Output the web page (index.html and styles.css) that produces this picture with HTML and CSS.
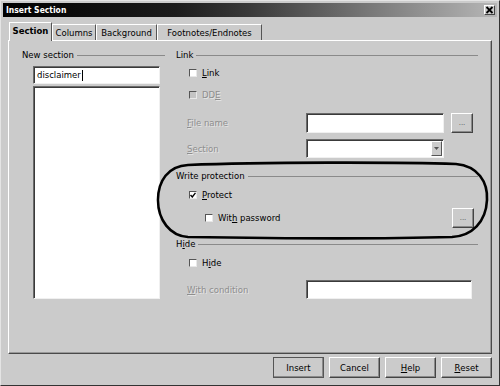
FILE: index.html
```html
<!DOCTYPE html>
<html lang="en">
<head>
  <meta charset="UTF-8" />
  <title>Insert Section</title>
  <link rel="stylesheet" href="styles.css">
</head>
<body>
  <div class="window">
    <div class="titlebar">
      <span class="title">Insert Section</span>
      <span class="close">
        <svg width="9" height="8" viewBox="0 0 9 8"><path d="M1.5 1 L7.5 7 M7.5 1 L1.5 7" stroke="#000" stroke-width="1.8"/></svg>
      </span>
    </div>

    <div class="tabs">
      <div class="tab active" style="width:43px">Section</div>
      <div class="tab" style="width:44px">Columns</div>
      <div class="tab" style="width:61px">Background</div>
      <div class="tab" style="width:105px">Footnotes/Endnotes</div>
    </div>

    <div class="panel">
      <div class="col-left">
        <div class="legend"><span>New section</span></div>
        <div class="field name">disclaimer<span class="caret"></span></div>
        <div class="field list"></div>
      </div>

      <div class="col-right">
        <div class="legend"><span>Link</span></div>
        <div class="check-row link-row"><span class="box"></span><span><u>L</u>ink</span></div>
        <div class="check-row dde-row disabled"><span class="box off"></span><span>DD<u>E</u></span></div>
        <div class="field-row file-row">
          <span class="lbl disabled"><u>F</u>ile name</span>
          <span class="field w138"></span>
          <span class="btn small">...</span>
        </div>
        <div class="field-row section-row">
          <span class="lbl disabled"><u>S</u>ection</span>
          <span class="field w138 combo"><span class="drop"><svg width="5" height="3" viewBox="0 0 5 3"><path d="M0 0 H5 L2.5 3 Z" fill="#555"/></svg></span></span>
        </div>

        <div class="legend wp"><span>Write protection</span></div>
        <div class="check-row protect-row">
          <span class="box"><svg width="6" height="6" viewBox="0 0 6 6"><path d="M0.5 3 L2.3 5 L5.5 0.8" stroke="#000" stroke-width="1.4" fill="none"/></svg></span>
          <span><u>P</u>rotect</span>
        </div>
        <div class="check-row pass-row">
          <span class="box"></span><span class="grow">Wit<u>h</u> password</span>
          <span class="btn small">...</span>
        </div>

        <div class="legend hide"><span>H<u>i</u>de</span></div>
        <div class="check-row hide-row"><span class="box"></span><span>H<u>i</u>de</span></div>
        <div class="field-row cond-row">
          <span class="lbl disabled"><u>W</u>ith condition</span>
          <span class="field w166"></span>
        </div>
      </div>
    </div>

    <div class="buttons">
      <span class="btn default">Insert</span>
      <span class="btn">Cancel</span>
      <span class="btn"><u>H</u>elp</span>
      <span class="btn"><u>R</u>eset</span>
    </div>

    <!-- hand drawn mark around the write protection group -->
    <svg class="mark" width="500" height="386" viewBox="0 0 500 386">
      <path d="M188 165 C260 162 400 162 456 164 C478 166 488 182 487 200 C486 222 472 236 452 237 C380 239 250 238 188 237 C170 236 158 220 158 200 C158 181 168 166 188 165 Z"
            fill="none" stroke="#000" stroke-width="2.6"/>
    </svg>
  </div>
</body>
</html>
```

FILE: styles.css
```css
body {
  margin: 0;
  font-family: "DejaVu Sans", sans-serif;
  font-size: 8.5px;
  color: #000;
}
.window {
  position: relative;
  width: 500px;
  height: 386px;
  box-sizing: border-box;
  background: #cbcbcb;
  border: 1px solid;
  border-color: #e4e4e4 #333 #333 #e4e4e4;
  padding: 2px 2px 1px 2px;
  display: flex;
  flex-direction: column;
}
.titlebar {
  height: 14px;
  display: flex;
  align-items: center;
  justify-content: space-between;
  padding: 0 2px 0 3px;
  background: linear-gradient(to right, #000 0%, #1c1c1c 35%, #3a3a3a 50%, #7a7a7a 75%, #b6b6b6 100%);
}
.title {
  color: #fff;
  font-family: "DejaVu Sans Condensed", "DejaVu Sans", sans-serif;
  font-weight: bold;
  font-size: 8.5px;
}
.close {
  width: 11px;
  height: 10px;
  box-sizing: border-box;
  background: #cbcbcb;
  border: 1px solid;
  border-color: #fff #444 #444 #fff;
  display: flex;
  align-items: center;
  justify-content: center;
}
.tabs {
  margin-top: 5px;
  padding-left: 6px;
  height: 18px;
  display: flex;
  align-items: flex-end;
}
.tab {
  height: 16px;
  box-sizing: border-box;
  border-top: 1px solid #fff;
  border-left: 1px solid #fff;
  border-right: 1px solid #555;
  display: flex;
  align-items: center;
  justify-content: center;
  background: #cbcbcb;
}
.tab.active {
  position: relative;
  z-index: 1;
  height: 19px;
  margin-bottom: -1px;
  font-weight: bold;
  padding-bottom: 2px;
}
.panel {
  margin-left: 5px;
  width: 484px;
  height: 314px;
  box-sizing: border-box;
  border: 1px solid;
  border-color: #fff #4a4a4a #4a4a4a #fff;
  box-shadow: inset -1px -1px 0 #999;
  padding: 8px 13px 0 13px;
  display: flex;
  gap: 11px;
}
.col-left {
  width: 143px;
}
.col-right {
  flex: 1;
}
.legend {
  height: 12px;
  display: flex;
  align-items: center;
}
.legend::after {
  content: '';
  flex: 1;
  margin-left: 3px;
  border-top: 1px solid #8a8a8a;
}
.field {
  box-sizing: border-box;
  background: #fff;
  border: 1px solid;
  border-color: #6a6a6a #f0f0f0 #f0f0f0 #6a6a6a;
  box-shadow: inset 1px 1px 0 #3a3a3a;
}
.name {
  margin: 5px 0 0 11px;
  width: 127px;
  height: 18px;
  padding-left: 3px;
  display: flex;
  align-items: center;
}
.caret {
  display: inline-block;
  width: 1px;
  height: 11px;
  margin-left: 1px;
  background: #000;
}
.list {
  margin: 2px 0 0 11px;
  width: 127px;
  height: 213px;
}
.check-row {
  height: 14px;
  display: flex;
  align-items: center;
  padding-left: 13px;
}
.box {
  width: 8px;
  height: 8px;
  box-sizing: border-box;
  margin-right: 5px;
  background: #fff;
  border: 1px solid;
  border-color: #555 #e8e8e8 #e8e8e8 #555;
  display: flex;
  align-items: center;
  justify-content: center;
}
.box.off {
  background: #c4c4c4;
}
.disabled {
  color: #8e8e8e;
  text-shadow: 1px 1px 0 #e4e4e4;
}
.link-row { margin-top: 5px; }
.dde-row { margin-top: 8px; }
.field-row {
  display: flex;
  align-items: center;
  padding-left: 11px;
}
.lbl {
  width: 119px;
}
.w138 { width: 138px; }
.w166 { width: 166px; }
.file-row {
  margin-top: 11px;
  height: 20px;
}
.file-row .field { height: 20px; }
.file-row .btn { margin-left: 7px; }
.section-row {
  margin-top: 6px;
  height: 19px;
}
.combo {
  height: 19px;
  display: flex;
  justify-content: flex-end;
  align-items: stretch;
  padding: 1px;
}
.drop {
  width: 11px;
  box-sizing: border-box;
  background: #cbcbcb;
  border: 1px solid;
  border-color: #fff #555 #555 #fff;
  display: flex;
  align-items: center;
  justify-content: center;
}
.legend.wp { margin-top: 12px; }
.protect-row { margin-top: 6px; }
.pass-row {
  margin-top: 6px;
  height: 20px;
  padding-left: 29px;
  padding-right: 4px;
}
.grow { flex: 1; }
.legend.hide { margin-top: 10px; }
.hide-row { margin-top: 6px; }
.cond-row {
  margin-top: 10px;
  height: 19px;
}
.cond-row .field { height: 19px; }
.btn {
  box-sizing: border-box;
  width: 51px;
  height: 21px;
  background: #cbcbcb;
  border: 1px solid;
  border-color: #fff #444 #444 #fff;
  box-shadow: inset -1px -1px 0 #8a8a8a;
  display: flex;
  align-items: center;
  justify-content: center;
}
.btn.small {
  width: 22px;
  height: 20px;
  font-size: 7px;
  color: #555;
}
.btn.default {
  border-color: #fff #222 #222 #fff;
  outline: 1px solid #555;
  outline-offset: -1px;
}
.buttons {
  margin-top: 3px;
  padding-right: 5px;
  display: flex;
  justify-content: flex-end;
  gap: 5px;
}
.mark {
  position: absolute;
  top: -1px;
  left: -1px;
  pointer-events: none;
}
```
